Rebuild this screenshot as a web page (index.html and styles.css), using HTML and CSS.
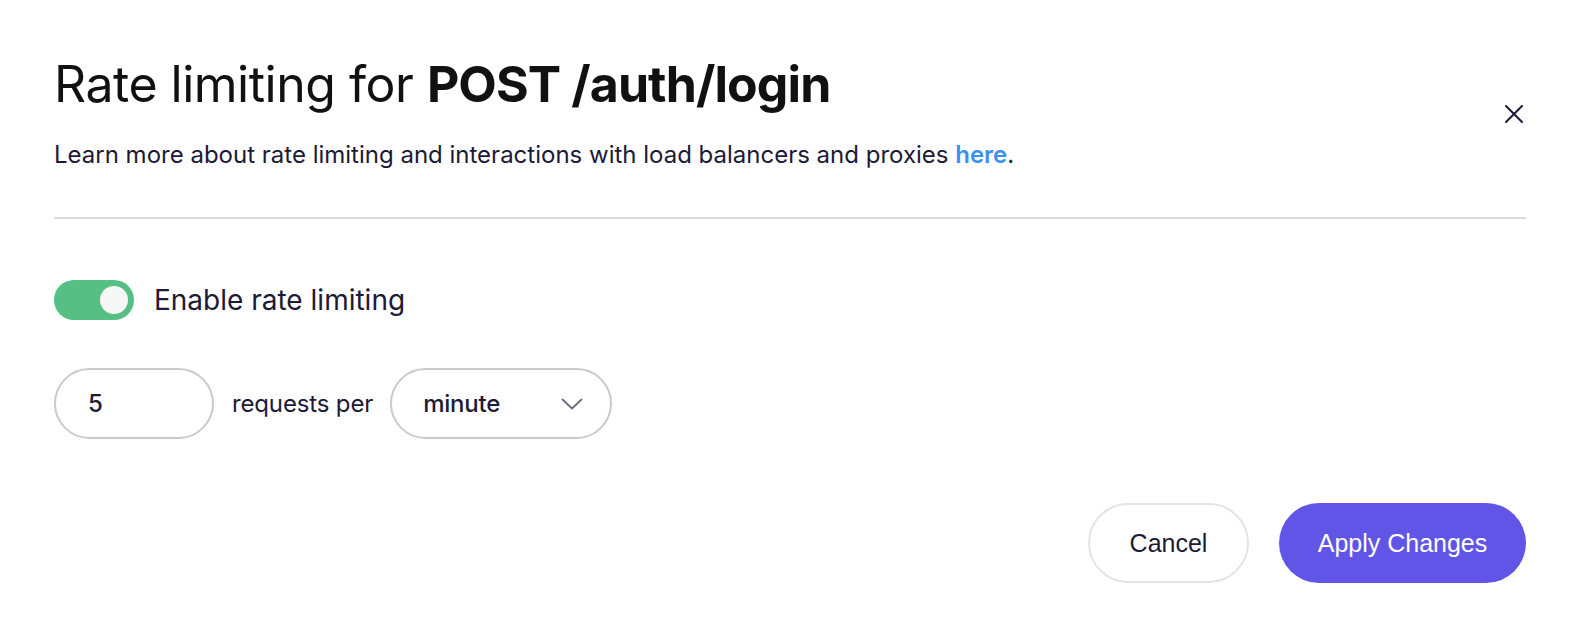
FILE: index.html
```html
<!DOCTYPE html>
<html lang="en">
<head>
    <meta charset="UTF-8">
    <title>Rate limiting</title>
    <link rel="stylesheet" href="styles.css">
</head>
<body>

    <div class="modal">
        <!-- Header -->
        <div class="modal-header">
            <div class="header-text">
                <h1>Rate limiting for <strong>POST /auth/login</strong></h1>
                <p>Learn more about rate limiting and interactions with load balancers and proxies <a href="#">here</a>.</p>
            </div>
            <button class="close-btn" aria-label="Close">
                <svg width="18" height="18" viewBox="0 0 18 18">
                    <path d="M1 1 L17 17 M17 1 L1 17" stroke="#1b1a3a" stroke-width="2" stroke-linecap="round"/>
                </svg>
            </button>
        </div>

        <hr class="divider">

        <!-- Toggle -->
        <label class="toggle-row">
            <span class="toggle on"><span class="knob"></span></span>
            <span class="toggle-label">Enable rate limiting</span>
        </label>

        <!-- Limit inputs -->
        <div class="limit-row">
            <div class="pill-input">5</div>
            <span class="limit-text">requests per</span>
            <div class="pill-select">
                <span>minute</span>
                <svg width="22" height="12" viewBox="0 0 22 12">
                    <path d="M1.5 1.5 L11 10.5 L20.5 1.5" fill="none" stroke="#6b6a7a" stroke-width="1.8" stroke-linecap="round" stroke-linejoin="round"/>
                </svg>
            </div>
        </div>

        <!-- Footer -->
        <div class="modal-footer">
            <button class="btn btn-cancel">Cancel</button>
            <button class="btn btn-apply">Apply Changes</button>
        </div>
    </div>

</body>
</html>
```

FILE: styles.css
```css
* {
    box-sizing: border-box;
    margin: 0;
    padding: 0;
}

body {
    background: #ffffff;
    font-family: 'Inter', 'Noto Sans', sans-serif;
    color: #1c1a36;
}

.modal {
    padding: 54px 56px 0 54px;
}

/* Header */
.modal-header {
    display: flex;
    justify-content: space-between;
    align-items: flex-start;
}

.modal-header h1 {
    font-size: 50px;
    line-height: 60px;
    font-weight: 400;
    color: #111114;
    letter-spacing: -0.5px;
}

.modal-header h1 strong {
    font-weight: 700;
    letter-spacing: -0.9px;
}

.modal-header p {
    margin-top: 26px;
    font-size: 24px;
    line-height: 29px;
    color: #1c1a36;
}

.modal-header p a {
    color: #3d8ff0;
    font-weight: 600;
    text-decoration: none;
}

.close-btn {
    background: none;
    border: none;
    cursor: pointer;
    margin-top: 51px;
    margin-right: 3px;
    width: 18px;
    height: 18px;
    display: flex;
}

.divider {
    border: none;
    border-top: 2px solid #d9dadd;
    margin-top: 48px;
}

/* Toggle */
.toggle-row {
    display: flex;
    align-items: center;
    gap: 20px;
    margin-top: 61px;
}

.toggle {
    width: 80px;
    height: 40px;
    border-radius: 20px;
    background: #56bf84;
    display: flex;
    align-items: center;
    justify-content: flex-end;
    padding: 0 6px;
}

.toggle .knob {
    width: 28px;
    height: 28px;
    border-radius: 50%;
    background: #f7f7f8;
}

.toggle-label {
    font-size: 28px;
    color: #1c1a36;
}

/* Limit inputs */
.limit-row {
    display: flex;
    align-items: center;
    margin-top: 48px;
}

.pill-input, .pill-select {
    height: 71px;
    border: 2px solid #c9c9ce;
    border-radius: 36px;
    display: flex;
    align-items: center;
    font-size: 24px;
    font-weight: 500;
    color: #1c1a36;
}

.pill-input {
    width: 160px;
    padding-left: 32px;
}

.limit-text {
    font-size: 24px;
    letter-spacing: -0.15px;
    color: #1c1a36;
    margin: 0 17px 0 18px;
}

.pill-select {
    width: 222px;
    padding: 0 27px 0 31px;
    justify-content: space-between;
}

.pill-select span {
    letter-spacing: -0.2px;
}

/* Footer */
.modal-footer {
    display: flex;
    justify-content: flex-end;
    gap: 30px;
    margin-top: 64px;
}

.btn {
    font-family: 'Liberation Sans', Arial, sans-serif;
    font-size: 25px;
    height: 80px;
    border-radius: 40px;
    cursor: pointer;
}

.btn-cancel {
    width: 161px;
    background: #ffffff;
    border: 2px solid #e4e4e7;
    color: #1c1a36;
}

.btn-apply {
    width: 247px;
    background: #6155e8;
    border: none;
    color: #ffffff;
}
```
